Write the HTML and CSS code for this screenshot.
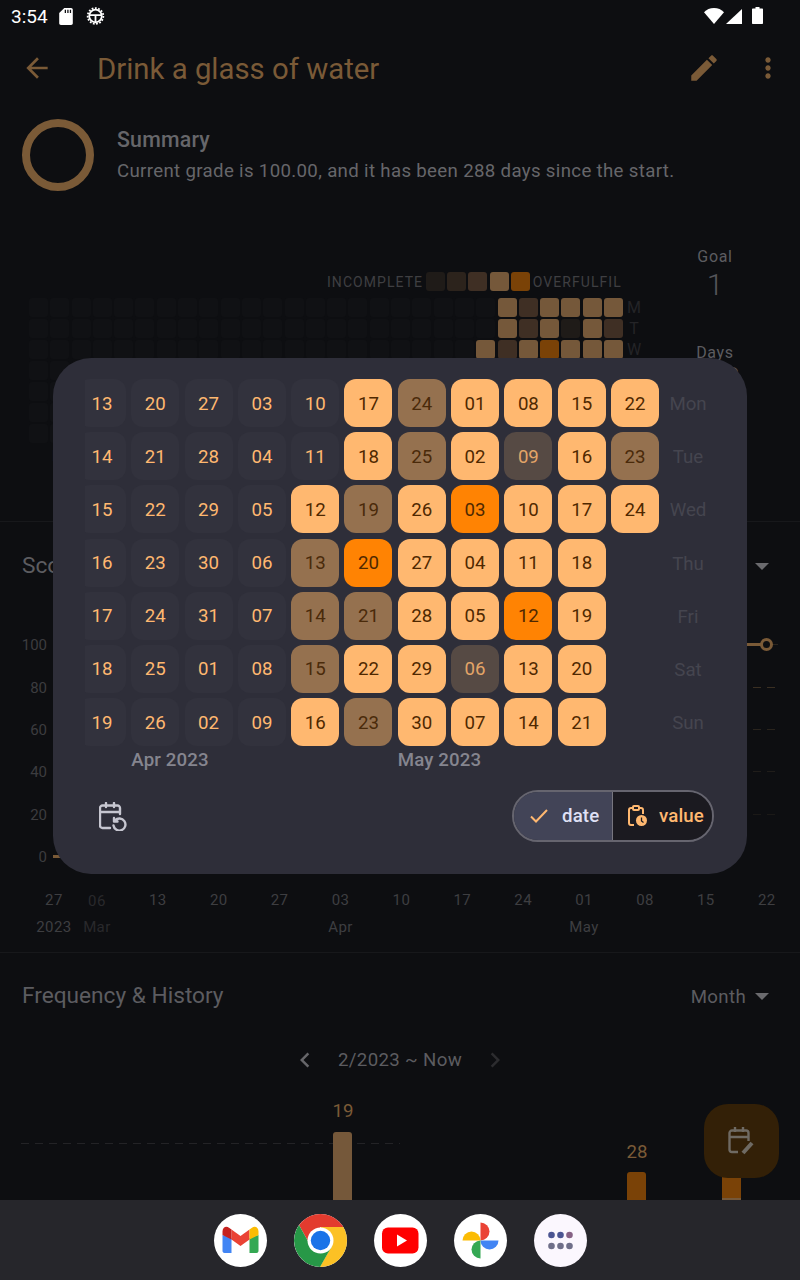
FILE: index.html
```html
<!DOCTYPE html>
<html lang="en">
<head>
    <meta charset="UTF-8">
    <meta name="viewport" content="width=device-width, initial-scale=1.0">
    <title>Drink a glass of water</title>
    <link rel="stylesheet" href="styles.css">
</head>
<body>
<div class="screen">
    <div class="page">
        <div class="statusbar">
            <span class="time">3:54</span>
            <svg class="sb-sd" viewBox="4 2 16 20"><path fill="#fff" d="M18 2h-8L4 8v12c0 1.100.9 2 2 2h12c1.100 0 2-.9 2-2V4c0-1.100-.9-2-2-2zm-6 6h-1.500V4H12v4zm3 0h-1.500V4H15v4zm3 0h-1.500V4H18v4z"/></svg>
            <svg class="sb-gear" viewBox="0 0 20 20"><circle cx="10" cy="10" r="7" fill="none" stroke="#fff" stroke-width="2"/><circle cx="10" cy="10" r="8.700" fill="none" stroke="#fff" stroke-width="2" stroke-dasharray="2 1.640"/><path d="M3.500 9h13M10 9v8" stroke="#fff" stroke-width="2" fill="none"/></svg>
            <span class="sb-space"></span>
            <svg class="sb-wifi" viewBox="0 0 20 16"><path fill="#fff" d="M10 16 0 4.200C2.500 1.500 6 0 10 0s7.500 1.500 10 4.200z"/></svg>
            <svg class="sb-signal" viewBox="0 0 16 15"><path fill="#fff" d="M16 0v15H0z"/></svg>
            <svg class="sb-battery" viewBox="0 0 11 17"><path fill="#fff" d="M3.500 0h4v1.500H10c.6 0 1 .4 1 1V16c0 .6-.4 1-1 1H1c-.6 0-1-.4-1-1V2.500c0-.6.4-1 1-1h2.500z"/></svg>
        </div>

        <div class="toolbar">
            <svg class="tb-back" viewBox="0 0 24 24"><path d="M20 11H7.830l5.590-5.590L12 4l-8 8 8 8 1.410-1.410L7.830 13H20v-2z"/></svg>
            <span class="tb-title">Drink a glass of water</span>
            <svg class="tb-edit" viewBox="0 0 24 24"><path d="M3 17.250V21h3.750L17.810 9.940l-3.750-3.750L3 17.250zM20.710 7.040c.39-.39.39-1.020 0-1.410l-2.340-2.340c-.39-.39-1.020-.39-1.410 0l-1.830 1.830 3.750 3.750 1.830-1.830z"/></svg>
            <svg class="tb-more" viewBox="0 0 24 24"><path d="M12 8c1.100 0 2-.9 2-2s-.9-2-2-2-2 .9-2 2 .9 2 2 2zm0 2c-1.100 0-2 .9-2 2s.9 2 2 2 2-.9 2-2-.9-2-2-2zm0 6c-1.100 0-2 .9-2 2s.9 2 2 2 2-.9 2-2-.9-2-2-2z"/></svg>
        </div>

        <div class="summary">
            <div class="ring"></div>
            <div class="summary-text">
                <div class="summary-title">Summary</div>
                <div class="summary-body">Current grade is 100.00, and it has been 288 days since the start.</div>
            </div>
        </div>

        <div class="heat">
            <div class="heat-main">
                <div class="legend">
                    <span>INCOMPLETE</span>
                    <i class="hc-k"></i><i class="hc-d2"></i><i class="hc-d"></i><i class="hc-f"></i><i class="hc-b"></i>
                    <span>OVERFULFIL</span>
                </div>
                <div class="heat-body">
                    <div class="heat-grid" id="heatGrid"></div>
                    <div class="heat-days">
                        <span>M</span><span>T</span><span>W</span>
                    </div>
                </div>
                <div class="heat-month">Feb</div>
            </div>
            <div class="stats">
                <div class="stat-label">Goal</div>
                <div class="stat-value">1</div>
                <div class="stat-label stat-gap">Days</div>
                <div class="stat-value stat-last">288</div>
            </div>
        </div>

        <div class="score">
            <div class="head">
                <span class="head-title">Score</span>
                <span class="head-menu"><i class="caret"></i></span>
            </div>
            <div class="yaxis">
                <div class="yrow"><span>100</span><div class="yline yline-top"><div class="score-line"></div><div class="score-mark"></div></div></div>
                <div class="yrow"><span>80</span><div class="yline yline-80"></div></div>
                <div class="yrow"><span>60</span><div class="yline yline-60"></div></div>
                <div class="yrow"><span>40</span><div class="yline yline-40"></div></div>
                <div class="yrow"><span>20</span><div class="yline yline-20"></div></div>
                <div class="yrow"><span>0</span><div class="yline"><div class="score-start"></div></div></div>
            </div>
            <div class="xaxis">
                <div class="xcol xcol-first"><span>27</span><span>2023</span></div>
                <div class="xcol xcol-dim"><span>06</span><span>Mar</span></div>
                <div class="xcol"><span>13</span></div>
                <div class="xcol"><span>20</span></div>
                <div class="xcol"><span>27</span></div>
                <div class="xcol"><span>03</span><span>Apr</span></div>
                <div class="xcol"><span>10</span></div>
                <div class="xcol"><span>17</span></div>
                <div class="xcol"><span>24</span></div>
                <div class="xcol"><span>01</span><span>May</span></div>
                <div class="xcol"><span>08</span></div>
                <div class="xcol"><span>15</span></div>
                <div class="xcol"><span>22</span></div>
            </div>
        </div>

        <div class="freq">
            <div class="head">
                <span class="head-title">Frequency &amp; History</span>
                <span class="head-menu">Month<i class="caret"></i></span>
            </div>
            <div class="range">
                <svg class="chev" viewBox="0 0 24 24"><path d="M15.400 7.400 14 6l-6 6 6 6 1.400-1.400L10.800 12z"/></svg>
                <span>2/2023 ~ Now</span>
                <svg class="chev chev-off" viewBox="0 0 24 24"><path d="M8.600 7.400 10 6l6 6-6 6-1.400-1.400 4.600-4.600z"/></svg>
            </div>
            <div class="bars">
                <div class="bars-dash"></div>
                <div class="bar-col bar-19"><span>19</span><div class="bar"></div></div>
                <div class="bar-col bar-28"><span>28</span><div class="bar"></div></div>
                <div class="bar-col bar-now"><div class="bar"></div></div>
            </div>
        </div>
    </div>

    <div class="dock">
        <div class="app">
            <svg viewBox="0 0 53 53">
                <path fill="#4285f4" d="M8.500 21v16c0 1.100.9 2 2 2h7V24z"/>
                <path fill="#34a853" d="M35.500 24v15h7c1.100 0 2-.9 2-2V21z"/>
                <path fill="#ea4335" d="M17.500 15.500v10l9 6.500 9-6.500v-10l-9 6.500z"/>
                <path fill="#c5221f" d="M8.500 17.500V21l9 4.500v-10l-2.500-1.800c-3-2.200-6.500-.2-6.500 3.800z"/>
                <path fill="#fbbc04" d="M44.500 17.500V21l-9 4.500v-10l2.500-1.800c3-2.200 6.500-.2 6.500 3.800z"/>
            </svg>
        </div>
        <div class="app">
            <svg viewBox="0 0 53 53">
                <path fill="#fcc125" d="M26.500 13h23.400a26.500 26.500 0 0 1-24 40l12-21z"/>
                <path fill="#e33b2e" d="M26.500 13h23.400A26.500 26.500 0 0 0 5 11l10 18z"/>
                <path fill="#279847" d="M5 11a26.500 26.500 0 0 0 21 42l12-21-23-3z"/>
                <circle cx="26.500" cy="26.500" r="13" fill="#fff"/>
                <circle cx="26.500" cy="26.500" r="9.700" fill="#1a73e8"/>
            </svg>
        </div>
        <div class="app">
            <svg viewBox="0 0 53 53">
                <rect x="8" y="13.500" width="36.500" height="26" rx="6" fill="#f00"/>
                <path fill="#fff" d="M23 20.500v12l10-6z"/>
            </svg>
        </div>
        <div class="app">
            <svg viewBox="0 0 53 53">
                <path fill="#ea4335" d="M26.500 8.500a9 9 0 0 1 0 18z"/>
                <path fill="#fbbc04" d="M8.500 26.500a9 9 0 0 1 18 0z"/>
                <path fill="#4285f4" d="M44.500 26.500a9 9 0 0 1-18 0z"/>
                <path fill="#34a853" d="M26.500 44.500a9 9 0 0 1 0-18z"/>
            </svg>
        </div>
        <div class="app app-tint">
            <svg viewBox="0 0 53 53">
                <circle cx="17.500" cy="21" r="3.300" fill="#4b5592"/>
                <circle cx="26.500" cy="21" r="3.300" fill="#4b5592"/>
                <circle cx="35.500" cy="21" r="3.300" fill="#866285"/>
                <circle cx="17.500" cy="32" r="3.300" fill="#6f6f89"/>
                <circle cx="26.500" cy="32" r="3.300" fill="#6f6f89"/>
                <circle cx="35.500" cy="32" r="3.300" fill="#6f6f89"/>
            </svg>
        </div>
    </div>

    <div class="fab">
        <svg viewBox="0 0 28 28" fill="none" stroke="#6f6a63" stroke-width="2.400">
            <path d="M10 25H4a2.500 2.500 0 0 1-2.500-2.500V6A2.500 2.500 0 0 1 4 3.500h14A2.500 2.500 0 0 1 20.500 6v8M1.500 10h19M7 0v5M15 0v5"/>
            <path d="m15 26 9-10" stroke-width="4"/>
        </svg>
    </div>

    <div class="dialog">
        <div class="cal">
            <div class="cal-clip">
                <div class="cal-grid">
                    <span class="day">13</span><span class="day">14</span><span class="day">15</span><span class="day">16</span><span class="day">17</span><span class="day">18</span><span class="day">19</span>
                    <span class="day">20</span><span class="day">21</span><span class="day">22</span><span class="day">23</span><span class="day">24</span><span class="day">25</span><span class="day">26</span>
                    <span class="day">27</span><span class="day">28</span><span class="day">29</span><span class="day">30</span><span class="day">31</span><span class="day">01</span><span class="day">02</span>
                    <span class="day">03</span><span class="day">04</span><span class="day">05</span><span class="day">06</span><span class="day">07</span><span class="day">08</span><span class="day">09</span>
                    <span class="day">10</span><span class="day">11</span><span class="day on">12</span><span class="day part">13</span><span class="day part">14</span><span class="day part">15</span><span class="day on">16</span>
                    <span class="day on">17</span><span class="day on">18</span><span class="day part">19</span><span class="day over">20</span><span class="day part">21</span><span class="day on">22</span><span class="day part">23</span>
                    <span class="day part">24</span><span class="day part">25</span><span class="day on">26</span><span class="day on">27</span><span class="day on">28</span><span class="day on">29</span><span class="day on">30</span>
                    <span class="day on">01</span><span class="day on">02</span><span class="day over">03</span><span class="day on">04</span><span class="day on">05</span><span class="day low">06</span><span class="day on">07</span>
                    <span class="day on">08</span><span class="day low">09</span><span class="day on">10</span><span class="day on">11</span><span class="day over">12</span><span class="day on">13</span><span class="day on">14</span>
                    <span class="day on">15</span><span class="day on">16</span><span class="day on">17</span><span class="day on">18</span><span class="day on">19</span><span class="day on">20</span><span class="day on">21</span>
                    <span class="day on">22</span><span class="day part">23</span><span class="day on">24</span>
                </div>
                <div class="cal-months">
                    <span class="cal-month-apr">Apr 2023</span>
                    <span class="cal-month-may">May 2023</span>
                </div>
            </div>
            <div class="cal-days">
                <span>Mon</span><span>Tue</span><span>Wed</span><span>Thu</span><span>Fri</span><span>Sat</span><span>Sun</span>
            </div>
        </div>
        <div class="dialog-foot">
            <svg class="reset" viewBox="0 0 29 29" fill="none" stroke="#c6c6d0" stroke-width="2.400" stroke-linecap="round">
                <path d="M11 26H3.500a2.500 2.500 0 0 1-2.500-2.500V6a2.500 2.500 0 0 1 2.500-2.500h15A2.500 2.500 0 0 1 21 6v6M1 10h20M7 1v4M15 1v4"/>
                <path d="M16 18.500a6 6 0 1 1-1.500 5M15 16v3.500h3.500" stroke-linejoin="round"/>
            </svg>
            <div class="toggle">
                <div class="seg seg-date">
                    <svg class="seg-check" viewBox="0 0 18 14" fill="none" stroke="#ffb870" stroke-width="2"><path d="m1 7.500 5 5L17 1"/></svg>
                    <span>date</span>
                </div>
                <div class="seg seg-value">
                    <svg class="seg-clip" viewBox="0 0 19 21" fill="none" stroke="#ffb870" stroke-width="2">
                        <path d="M6 20H3a2 2 0 0 1-2-2V5a2 2 0 0 1 2-2h2M11 3h2a2 2 0 0 1 2 2v4"/>
                        <rect x="5" y="1" width="6" height="4" rx="1"/>
                        <circle cx="13.500" cy="15.500" r="5.500" fill="#ffb870" stroke="none"/>
                        <path d="M13.500 12.500v3.500l2 1.500" stroke="#1b1a20" stroke-width="1.300"/>
                    </svg>
                    <span>value</span>
                </div>
            </div>
        </div>
    </div>
</div>
<script src="heatmap.js"></script>
</body>
</html>
```

FILE: styles.css
```css
* { box-sizing: border-box; }
body { margin: 0; background: #0d0e11; font-family: Roboto, "Liberation Sans", sans-serif; }
.screen { position: relative; width: 800px; height: 1280px; display: flex; flex-direction: column; overflow: hidden; background: #0d0e11; }
.page { flex: 1; min-height: 0; overflow: hidden; }
svg { display: block; flex: none; }

/* status bar */
.statusbar { height: 32px; display: flex; align-items: center; padding: 0 37px 0 11px; }
.time { color: #fff; font-size: 19px; width: 48px; }
.sb-sd { width: 14px; height: 17px; }
.sb-gear { width: 19px; height: 18px; margin-left: 13px; }
.sb-space { flex: 1; }
.sb-wifi { width: 20px; height: 16px; }
.sb-signal { width: 16px; height: 15px; margin-left: 2px; }
.sb-battery { width: 11px; height: 17px; margin-left: 10px; margin-top: -2px; }

/* toolbar */
.toolbar { height: 64px; margin-top: 4px; display: flex; align-items: center; padding: 0 16px 0 21px; }
.toolbar svg { fill: #7a5a37; }
.tb-back { width: 32px; height: 32px; }
.tb-title { flex: 1; margin-left: 44px; padding-top: 1px; color: #7a5a37; font-size: 29.330px; }
.tb-edit { width: 34px; height: 34px; }
.tb-more { width: 32px; height: 32px; margin-left: 31px; }

/* summary */
.summary { margin-top: 19px; height: 72px; display: flex; align-items: center; padding-left: 22px; }
.ring { width: 72px; height: 72px; border: 8px solid #7a5a37; border-radius: 50%; }
.summary-text { margin: 3px 0 0 23px; }
.summary-title { color: #66666a; font-size: 21.330px; font-weight: 500; letter-spacing: .2px; line-height: 28px; }
.summary-body { margin-top: 1px; color: #66666a; font-size: 18.670px; line-height: 32px; letter-spacing: .33px; }

/* heat map */
.heat { height: 281px; margin-top: 50px; display: flex; padding-left: 29px; border-bottom: 1px solid #17181b; }
.heat-main { width: 620px; padding-top: 31px; }
.legend { display: flex; align-items: center; height: 19px; color: #3f3f42; font-size: 14px; letter-spacing: 1.050px; margin-left: 298px; }
.legend i { width: 19px; height: 19px; border-radius: 3px; margin-left: 2.200px; }
.legend i:first-of-type { margin-left: 3px; }
.legend span:last-child { margin-left: 3px; }
.hc-e { background: #101114; }
.hc-k { background: #1f1b18; }
.hc-d2 { background: #2c231c; }
.hc-d { background: #3f2f24; }
.hc-f { background: #75583a; }
.hc-b { background: #7a4207; }
.heat-body { display: flex; margin-top: 7px; }
.heat-grid { display: grid; grid-template-rows: repeat(7, 19px); grid-auto-columns: 19px; grid-auto-flow: column; row-gap: 2px; column-gap: 2.300px; }
.heat-grid i { border-radius: 3px; }
.heat-days { display: grid; grid-template-rows: repeat(7, 19px); row-gap: 2px; width: 20px; margin-left: 1px; text-align: center; color: #242427; font-size: 16px; line-height: 19px; }
.heat-month { margin: 3px 0 0 23px; color: #3a3a3d; font-size: 15px; line-height: 20px; }
.stats { width: 80px; margin-left: 26px; padding-top: 6px; text-align: center; color: #5c5c60; }
.stat-label { font-size: 16px; line-height: 20px; letter-spacing: .67px; }
.stat-value { font-size: 30px; line-height: 30px; margin-top: 3px; color: #55555a; font-weight: 300; }
.stat-gap { margin-top: 43px; }
.stat-last { line-height: 24px; }

/* section headers */
.head { display: flex; align-items: center; justify-content: space-between; height: 26px; padding: 0 31px 0 22px; color: #5c5c60; }
.head-title { font-size: 22.670px; }
.head-menu { display: flex; align-items: center; font-size: 18.670px; letter-spacing: .33px; margin-top: 3px; }
.caret { width: 0; height: 0; margin-left: 9px; border: 7px solid transparent; border-top: 7px solid #6a6a6e; border-bottom: 0; }

/* score chart */
.score { padding-top: 30px; height: 431px; border-bottom: 1px solid #17181b; }
.yaxis { margin-top: 46px; }
.yrow { display: flex; align-items: center; height: 42.400px; color: #3c3c3f; font-size: 15px; }
.yrow span { width: 47px; text-align: right; }
.yline { position: relative; flex: none; width: 725px; height: 1px; margin: -1px 0 0 6px; }
.yline-top { background: #2a241d; }
.yline-80 { background: repeating-linear-gradient(90deg, #3a2f22 0 8px, transparent 8px 14px); }
.yline-60 { background: repeating-linear-gradient(90deg, #2a241d 0 8px, transparent 8px 14px); }
.yline-40 { background: repeating-linear-gradient(90deg, #201d1a 0 8px, transparent 8px 14px); }
.yline-20 { background: repeating-linear-gradient(90deg, #1b1917 0 8px, transparent 8px 14px); }
.score-line { position: absolute; left: 0; right: 15px; top: -1px; height: 3px; background: #7a5a37; }
.score-mark { position: absolute; right: 5px; top: -6px; width: 13px; height: 13px; border: 3px solid #7a5a37; border-radius: 50%; background: #0d0e11; }
.score-start { position: absolute; left: 0; top: -1px; width: 10px; height: 3px; background: #7a5a37; }
.xaxis { display: flex; margin-top: 11.300px; padding-left: 23.500px; color: #3e3e41; font-size: 15px; letter-spacing: .4px; }
.xcol { display: flex; flex-direction: column; align-items: center; row-gap: 7px; width: 60.900px; line-height: 20px; }
.xcol-dim { width: 25px; margin-right: 18px; color: #29292c; padding-top: 1px; row-gap: 6px; }

/* frequency */
.freq { padding-top: 29px; }
.range { display: flex; align-items: center; justify-content: center; height: 24px; margin-top: 40px; color: #5c5c60; font-size: 18.670px; letter-spacing: .33px; column-gap: 18px; }
.chev { width: 30px; height: 30px; fill: #66666a; }
.chev-off { fill: #2c2c2f; }
.bars { position: relative; display: flex; align-items: flex-end; height: 128px; color: #7a5a37; font-size: 18.670px; line-height: 20px; text-align: center; }
.bars-dash { position: absolute; left: 21px; top: 71px; width: 379px; height: 1px; background: repeating-linear-gradient(90deg, #232326 0 8px, transparent 8px 14px); }
.bar-col { position: relative; width: 19px; }
.bar-col span { display: block; width: 40px; margin-left: -10px; }
.bar { border-radius: 3px 3px 0 0; }
.bar-19 { margin-left: 333px; }
.bar-19 span { margin-bottom: 11px; }
.bar-19 .bar { height: 68px; background: #75583a; }
.bar-28 { margin-left: 275px; }
.bar-28 span { margin-bottom: 10px; }
.bar-28 .bar { height: 28px; background: #7a4207; }
.bar-now { margin-left: 76px; }
.bar-now .bar { height: 50px; background: #7a4207; border-bottom: 2px solid #75583a; }

/* launcher */
.dock { height: 80px; flex: none; display: flex; align-items: center; justify-content: center; column-gap: 27px; background: #26262b; }
.app { width: 53px; height: 53px; border-radius: 50%; background: #fff; overflow: hidden; }
.app-tint { background: #fbf7fe; }
.app svg { width: 53px; height: 53px; }

/* floating button */
.fab { position: absolute; left: 704px; top: 1104px; width: 75px; height: 74px; border-radius: 24px; background: #332007; display: flex; align-items: center; justify-content: center; }
.fab svg { width: 28px; height: 28px; }

/* date dialog */
.dialog { position: absolute; left: 53px; top: 358px; width: 694px; height: 516px; border-radius: 38px; background: #2e2e39; padding-top: 21px; }
.cal { display: flex; margin-left: 32px; }
.cal-clip { width: 579px; overflow: hidden; }
.cal-grid { display: grid; margin-left: -7px; grid-template-rows: repeat(7, 48px); grid-auto-columns: 48px; grid-auto-flow: column; row-gap: 5.200px; column-gap: 5.300px; }
.day { display: flex; align-items: center; justify-content: center; padding-top: 1px; border-radius: 12px; background: #32323d; color: #ffb870; font-size: 18.670px; }
.day.on { background: #ffb870; color: #4f2800; }
.day.part { background: #95714f; color: #4a2a0a; }
.day.low { background: #564a44; color: #e3a568; }
.day.over { background: #ff8303; color: #4f2800; }
.cal-months { display: grid; margin: 2.800px 0 0 -7px; grid-template-columns: repeat(11, 48px); column-gap: 5.300px; color: #85858f; font-size: 18.670px; font-weight: 500; letter-spacing: .13px; line-height: 22px; }
.cal-month-apr { grid-column: 2 / span 3; }
.cal-month-may { grid-column: 7 / span 3; }
.cal-days { display: grid; grid-template-rows: repeat(7, 48px); row-gap: 5.200px; width: 48px; padding-top: 1px; color: #45454f; font-size: 18.670px; text-align: center; line-height: 48px; }
.dialog-foot { display: flex; align-items: center; justify-content: space-between; margin-top: 19px; padding: 0 33px 0 46px; }
.reset { width: 29px; height: 29px; margin-top: 1px; }
.toggle { display: flex; width: 202px; height: 52px; border: 2px solid #66656f; border-radius: 26px; overflow: hidden; font-size: 18.670px; font-weight: 500; letter-spacing: .13px; }
.seg { display: flex; align-items: center; width: 50%; }
.seg-date { padding-left: 16px; column-gap: 14px; background: #424457; color: #dfe0f5; border-right: 1px solid #77767f; }
.seg-value { padding-left: 15px; column-gap: 12px; background: #1b1a20; color: #ffb870; }
.seg-check { width: 18px; height: 14px; }
.seg-clip { width: 19px; height: 21px; }
```

FILE: heatmap.js
```js
// filled columns at the right of the grid, one letter per weekday
var recent = ["--fdddf", "ffdbdfd", "ddfffff", "ffbffkf", "fkffbff", "fffffff", "fdf----"];
var colors = { f: "hc-f", d: "hc-d", k: "hc-k", b: "hc-b" };
var grid = document.getElementById("heatGrid");

for (var col = 0; col < 28; col++) {
    var levels = recent[col - 21] || "-------";
    for (var row = 0; row < 7; row++) {
        var cell = document.createElement("i");
        cell.className = colors[levels[row]] || "hc-e";
        grid.appendChild(cell);
    }
}
```
